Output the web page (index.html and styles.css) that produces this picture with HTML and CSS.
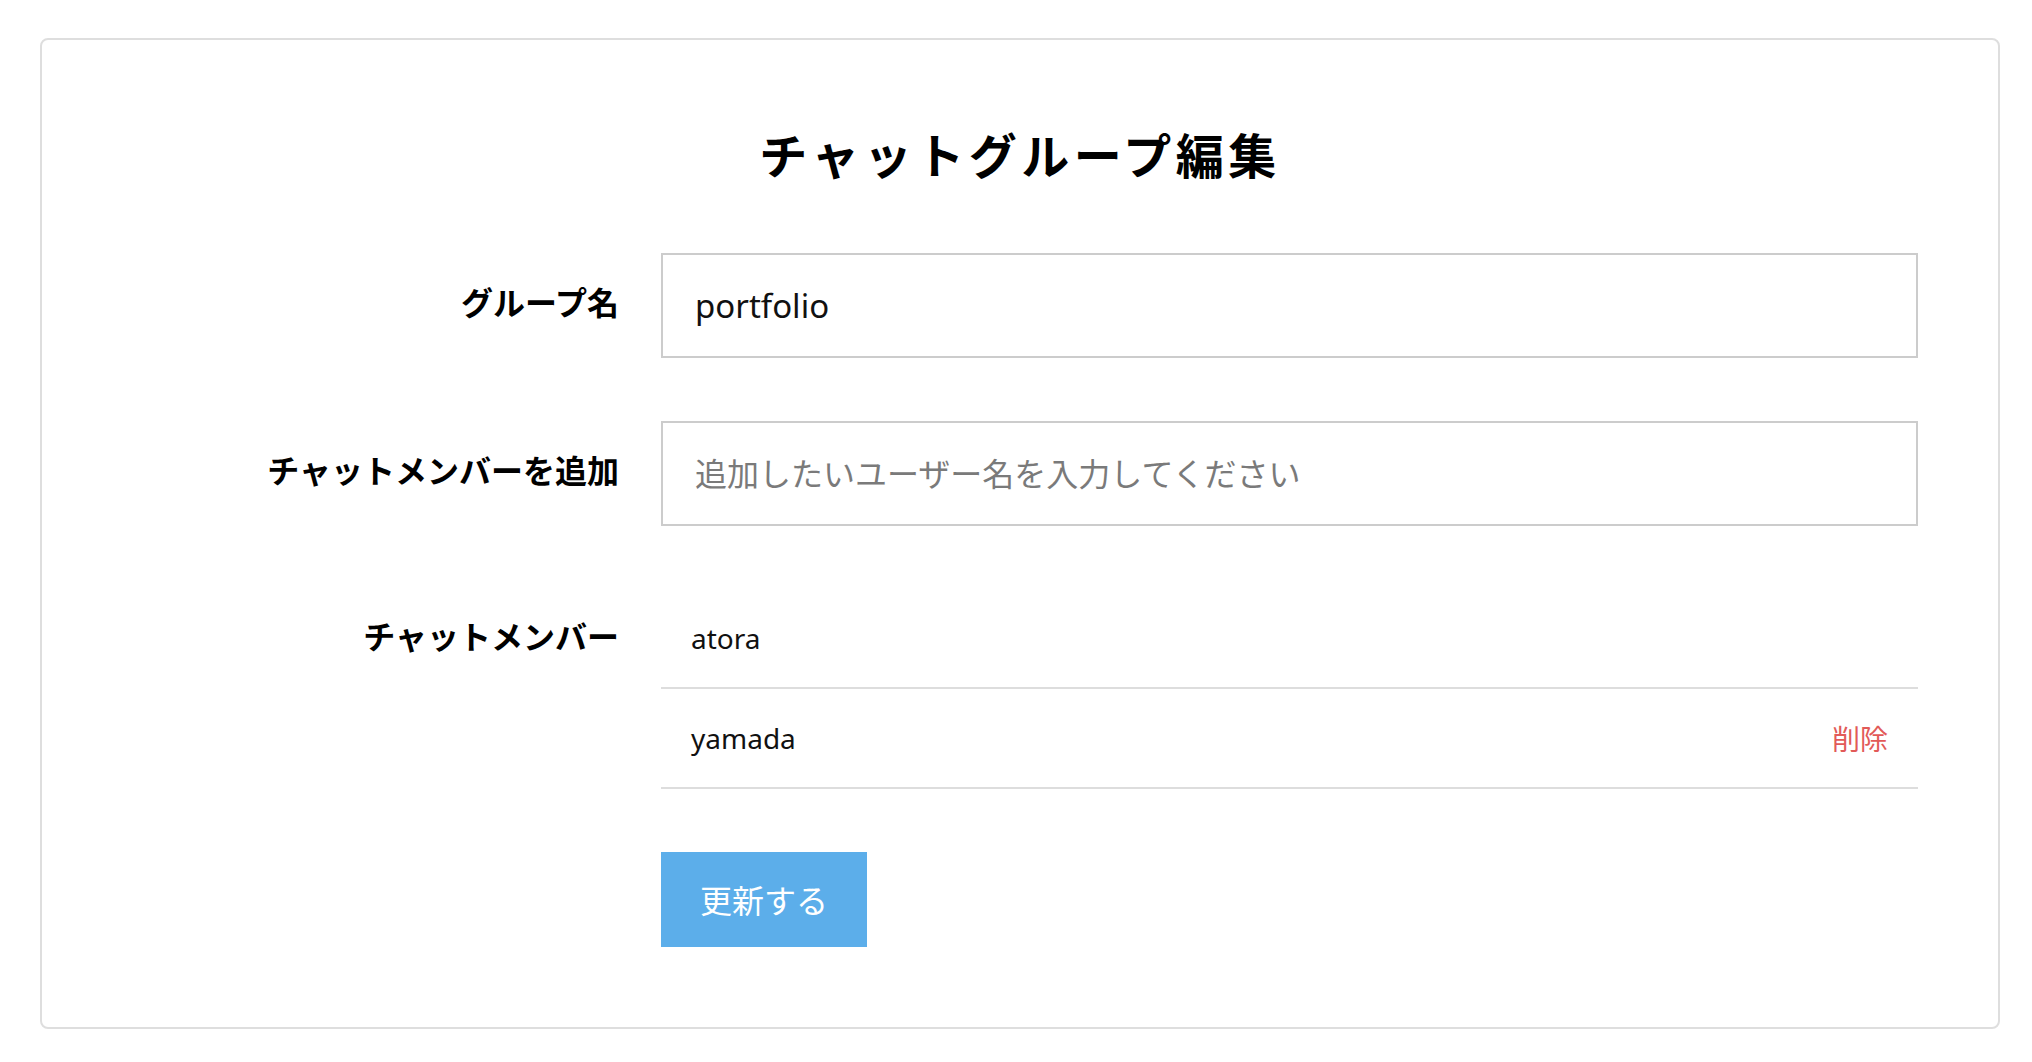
FILE: index.html
```html
<!DOCTYPE html>
<html lang="ja">
<head>
<meta charset="utf-8">
<title>チャットグループ編集</title>
<link rel="stylesheet" href="styles.css">
</head>
<body>
<div class="page">
  <div class="card">
    <h1 class="title">チャットグループ編集</h1>
    <form class="form">
      <label class="label label-input" for="group-name">グループ名</label>
      <input class="input" id="group-name" type="text" value="portfolio">

      <label class="label label-input" for="add-member">チャットメンバーを追加</label>
      <input class="input" id="add-member" type="text" placeholder="追加したいユーザー名を入力してください">

      <div class="label label-members">チャットメンバー</div>
      <div class="members">
        <div class="member"><span class="member-name">atora</span></div>
        <div class="member"><span class="member-name">yamada</span><span class="member-remove">削除</span></div>
      </div>

      <div class="actions">
        <button class="submit" type="button">更新する</button>
      </div>
    </form>
  </div>
</div>
</body>
</html>
```

FILE: styles.css
```css
* {
  box-sizing: border-box;
}

html, body {
  margin: 0;
  padding: 0;
  background: #ffffff;
}

body {
  font-family: "Noto Sans", "Noto Sans CJK JP", sans-serif;
  color: #111111;
}

.page {
  padding: 38px 0 0 40px;
}

.card {
  width: 1960px;
  border: 2px solid #dedede;
  border-radius: 8px;
  padding: 78px 80px 80px;
}

.title {
  margin: 0 0 63px;
  font-family: "Noto Sans CJK JP", sans-serif;
  font-size: 48px;
  line-height: 70px;
  padding-bottom: 2px;
  font-weight: 700;
  letter-spacing: 4.5px;
  text-align: center;
  color: #000000;
}

.form {
  display: grid;
  grid-template-columns: 497px 1fr;
  column-gap: 42px;
  row-gap: 63px;
  align-items: start;
}

.label {
  display: flex;
  align-items: center;
  justify-content: flex-end;
  font-family: "Noto Sans CJK JP", sans-serif;
  font-size: 32px;
  font-weight: 700;
  color: #000000;
  white-space: nowrap;
}

.label-input {
  height: 105px;
  padding-bottom: 10px;
}

.label-members {
  height: 96px;
  padding-bottom: 4px;
}

.input {
  display: block;
  width: 100%;
  height: 105px;
  margin: 0;
  padding: 0 32px;
  border: 2px solid #cccccc;
  border-radius: 0;
  outline: none;
  background: #ffffff;
  font-family: "Noto Sans", "Noto Sans CJK JP", sans-serif;
  font-size: 33px;
  color: #111111;
}

.input::placeholder {
  color: #7a7a7a;
  font-family: "Noto Sans CJK JP", sans-serif;
  font-size: 32px;
}

.members {
  display: flex;
  flex-direction: column;
}

.member {
  display: flex;
  align-items: center;
  justify-content: space-between;
  height: 100px;
  padding: 0 30px;
  border-bottom: 2px solid #dddddd;
}

.member-name {
  font-size: 28px;
  color: #111111;
}

.member-remove {
  font-family: "Noto Sans CJK JP", sans-serif;
  font-size: 28px;
  color: #e25a58;
}

.actions {
  grid-column: 2;
  display: flex;
}

.submit {
  height: 95px;
  padding: 0 39px;
  border: none;
  border-radius: 0;
  background: #5caeea;
  color: #ffffff;
  font-family: "Noto Sans CJK JP", sans-serif;
  font-size: 32px;
  line-height: 95px;
}
```
